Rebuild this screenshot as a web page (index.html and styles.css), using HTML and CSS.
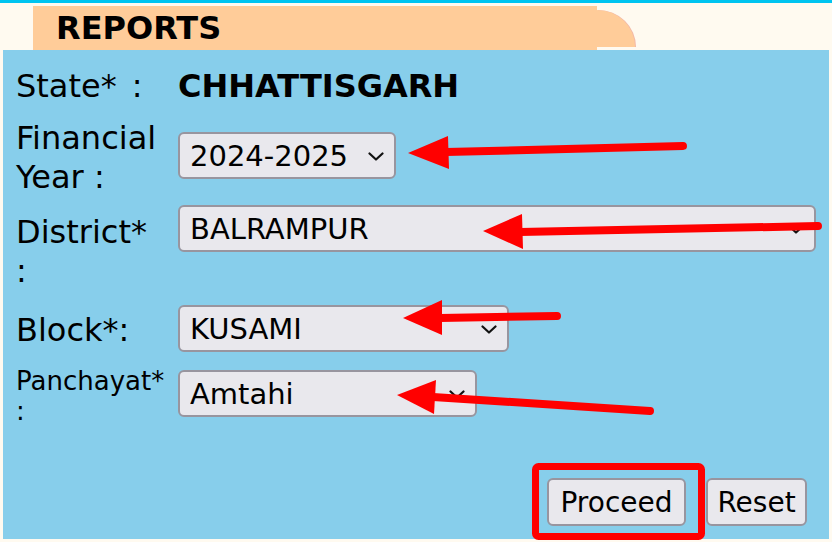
FILE: index.html
```html
<!DOCTYPE html>
<html lang="en">
<head>
<meta charset="utf-8">
<title>Reports</title>
<link rel="stylesheet" href="styles.css">
</head>
<body>
<div class="page">
  <div class="top-rule"></div>
  <div class="tab"><span class="tab-title">REPORTS</span></div>
  <div class="panel">
    <div class="row row-state">
      <div class="label">State*<span class="colon">:</span></div>
      <div class="state-value">CHHATTISGARH</div>
    </div>
    <div class="row row-fy">
      <div class="label">Financial<br>Year&nbsp;:</div>
      <div class="field field-fy">
        <select class="select"><option>2024-2025</option></select>
        <svg class="chev" viewBox="0 0 16 9"><path d="M1.5 1.5 L8 7.5 L14.5 1.5"/></svg>
      </div>
    </div>
    <div class="row row-district">
      <div class="label">District*<br>:</div>
      <div class="field field-district">
        <select class="select"><option>BALRAMPUR</option></select>
        <svg class="chev" viewBox="0 0 16 9"><path d="M1.5 1.5 L8 7.5 L14.5 1.5"/></svg>
      </div>
    </div>
    <div class="row row-block">
      <div class="label">Block*:</div>
      <div class="field field-block">
        <select class="select"><option>KUSAMI</option></select>
        <svg class="chev" viewBox="0 0 16 9"><path d="M1.5 1.5 L8 7.5 L14.5 1.5"/></svg>
      </div>
    </div>
    <div class="row row-panchayat">
      <div class="label label-small">Panchayat*<br>:</div>
      <div class="field field-panchayat">
        <select class="select"><option>Amtahi</option></select>
        <svg class="chev" viewBox="0 0 16 9"><path d="M1.5 1.5 L8 7.5 L14.5 1.5"/></svg>
      </div>
    </div>
    <div class="actions">
      <button class="btn btn-proceed" type="button">Proceed</button>
      <button class="btn btn-reset" type="button">Reset</button>
    </div>
  </div>
  <svg class="annotations" viewBox="0 0 832 542" width="832" height="542">
    <g class="arrow">
      <line x1="683" y1="146" x2="446" y2="152"/>
      <polygon points="408,153 448,136 449,169"/>
    </g>
    <g class="arrow">
      <line x1="818" y1="226" x2="520" y2="232"/>
      <polygon points="483,231 522,214 523,249"/>
    </g>
    <g class="arrow">
      <line x1="557" y1="316" x2="440" y2="318"/>
      <polygon points="403,318 442,300 442,335"/>
    </g>
    <g class="arrow">
      <line x1="650" y1="411" x2="433" y2="397"/>
      <polygon points="397,395 436,380 434,414"/>
    </g>
    <rect class="highlight" x="535.5" y="466.5" width="166" height="70" rx="3" ry="3"/>
  </svg>
</div>
</body>
</html>
```
FILE: styles.css
```css
html, body {
  margin: 0;
  padding: 0;
}

body {
  background: #fffaf0;
  font-family: "DejaVu Sans", Verdana, sans-serif;
  color: #000;
}

.page {
  position: relative;
  width: 832px;
  height: 542px;
  padding: 0 3px;
  box-sizing: border-box;
  overflow: hidden;
}

.top-rule {
  height: 3px;
  margin: 0 -3px;
  background: #00c4f0;
}

.tab {
  position: relative;
  width: 564px;
  height: 44px;
  margin: 3px 0 0 30px;
  background: #ffcc99;
}

.tab::after {
  content: "";
  position: absolute;
  left: 564px;
  top: 4px;
  width: 38px;
  height: 37px;
  background: #ffcc99;
  border-top-right-radius: 38px 37px;
  box-shadow: 1px 0 0 #f2b8a8;
}

.tab-title {
  display: block;
  padding-left: 23px;
  font-size: 32px;
  font-weight: bold;
  line-height: 44px;
}

.panel {
  height: 489px;
  padding: 17px 0 0 13px;
  box-sizing: border-box;
  background: #87ceeb;
}

.row {
  display: flex;
  align-items: flex-start;
}

.label {
  flex: none;
  width: 162px;
  font-size: 32px;
  line-height: 39px;
}

.colon {
  margin-left: 15px;
}

.label-small {
  font-size: 26px;
  line-height: 30px;
}

.state-value {
  font-size: 32px;
  font-weight: bold;
  line-height: 39px;
}

.row-fy { margin-top: 13px; }
.row-fy .field { margin-top: 13px; }

.row-district { margin-top: 8px; }
.row-district .label { margin-top: 8px; }

.row-block { margin-top: 14px; }
.row-block .label { margin-top: 6px; }

.row-panchayat { margin-top: 14px; }
.row-panchayat .field { margin-top: 4px; }

.field {
  position: relative;
  flex: none;
}

.field-fy { width: 218px; }
.field-district { width: 638px; }
.field-block { width: 331px; }
.field-panchayat { width: 299px; }

.select {
  -webkit-appearance: none;
  appearance: none;
  display: block;
  width: 100%;
  height: 47px;
  margin: 0;
  padding: 0 0 0 10px;
  box-sizing: border-box;
  border: 2px solid #98959f;
  border-radius: 6px;
  background: #e9e8ed;
  color: #000;
  font-family: "DejaVu Sans", Verdana, sans-serif;
  font-size: 29px;
}

.chev {
  position: absolute;
  right: 12px;
  top: 50%;
  width: 16px;
  height: 9px;
  margin-top: -4px;
  fill: none;
  stroke: #111;
  stroke-width: 2.2;
  stroke-linecap: round;
  stroke-linejoin: round;
}

.actions {
  display: flex;
  justify-content: flex-end;
  gap: 20px;
  margin-top: 52px;
  margin-right: 22px;
}

.btn {
  height: 48px;
  margin: 0;
  padding: 0;
  box-sizing: border-box;
  border: 2px solid #98959f;
  border-radius: 6px;
  background: #e9e8ed;
  color: #000;
  font-family: "DejaVu Sans", Verdana, sans-serif;
  font-size: 28px;
}

.btn-proceed { width: 139px; }
.btn-reset { width: 101px; }

.annotations {
  position: absolute;
  left: 0;
  top: 0;
  pointer-events: none;
}

.arrow line {
  stroke: #ff0000;
  stroke-width: 8;
  stroke-linecap: round;
}

.arrow polygon {
  fill: #ff0000;
}

.highlight {
  fill: none;
  stroke: #ff0000;
  stroke-width: 7;
}
```
